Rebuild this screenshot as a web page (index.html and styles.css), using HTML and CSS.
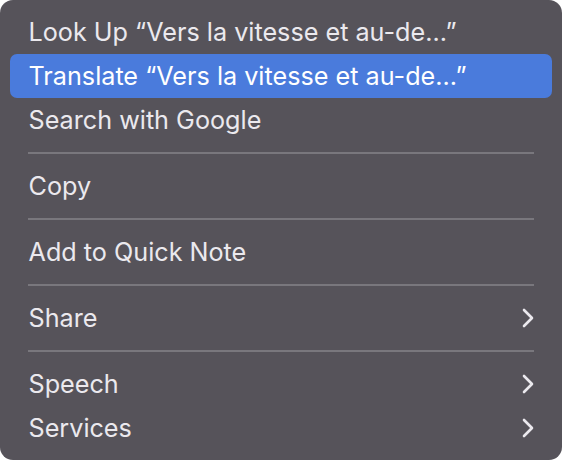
FILE: index.html
```html
<!DOCTYPE html>
<html>
<head>
<meta charset="utf-8">
<link rel="stylesheet" href="styles.css">
</head>
<body>
<div class="menu">
  <div class="item"><span>Look Up “Vers la vitesse et au-de...”</span></div>
  <div class="item active"><span>Translate “Vers la vitesse et au-de...”</span></div>
  <div class="item"><span>Search with Google</span></div>
  <div class="sep"></div>
  <div class="item"><span>Copy</span></div>
  <div class="sep"></div>
  <div class="item"><span>Add to Quick Note</span></div>
  <div class="sep"></div>
  <div class="item"><span>Share</span><svg class="chev" viewBox="0 0 12 20"><path d="M2 2 L10 10 L2 18"/></svg></div>
  <div class="sep"></div>
  <div class="item"><span>Speech</span><svg class="chev" viewBox="0 0 12 20"><path d="M2 2 L10 10 L2 18"/></svg></div>
  <div class="item"><span>Services</span><svg class="chev" viewBox="0 0 12 20"><path d="M2 2 L10 10 L2 18"/></svg></div>
</div>
</body>
</html>
```
FILE: styles.css
```css
html, body {
  margin: 0;
  padding: 0;
  background: #ffffff;
}
.menu {
  width: 562px;
  height: 460px;
  box-sizing: border-box;
  background: #56535a;
  border-radius: 13px;
  padding: 10px 10px;
  display: flex;
  flex-direction: column;
  font-family: Inter, "Noto Sans", sans-serif;
  font-size: 25.2px;
  color: #ebe9ee;
}
.item {
  height: 44px;
  display: flex;
  align-items: center;
  justify-content: space-between;
  padding: 0 18px 0 18.5px;
  border-radius: 7px;
}
.item.active {
  background: #4a7bdc;
  color: #ffffff;
}
.sep {
  height: 2px;
  margin: 10px 18px;
  background: #79777d;
}
.chev {
  width: 12px;
  height: 20px;
  fill: none;
  stroke: #ebe9ee;
  stroke-width: 2.6;
  stroke-linecap: round;
  stroke-linejoin: round;
}
```
